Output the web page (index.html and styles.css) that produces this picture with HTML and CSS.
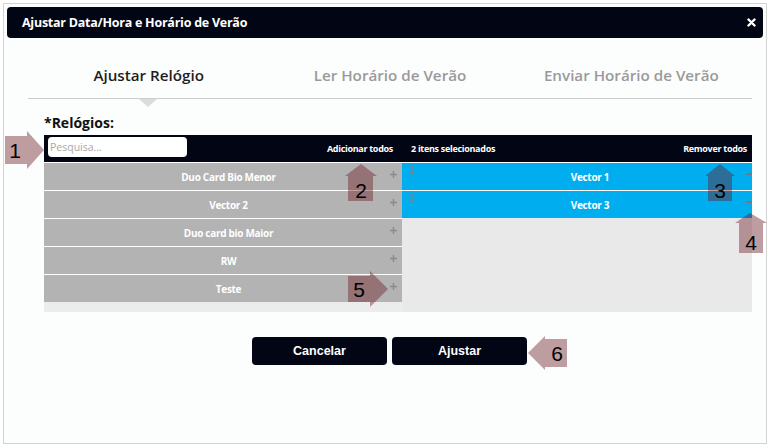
FILE: index.html
```html
<!DOCTYPE html>
<html lang="pt-BR">
<head>
<meta charset="utf-8">
<title>Ajustar Data/Hora e Horário de Verão</title>
<link rel="stylesheet" href="styles.css">
</head>
<body>
<div class="dialog">
  <div class="titlebar">
    <span class="title">Ajustar Data/Hora e Horário de Verão</span>
    <svg class="close" width="9" height="9" viewBox="0 0 9 9"><path d="M1.5 1.5 L7.5 7.5 M7.5 1.5 L1.5 7.5" stroke="#fff" stroke-width="2.4" stroke-linecap="round"/></svg>
  </div>
  <div class="tabs">
    <div class="tab active">Ajustar Relógio</div>
    <div class="tab">Ler Horário de Verão</div>
    <div class="tab">Enviar Horário de Verão</div>
  </div>
  <div class="label">*Relógios:</div>
  <div class="dual">
    <div class="col">
      <div class="dhead dhead-left">
        <input class="search" type="text" placeholder="Pesquisa...">
        <span>Adicionar todos</span>
      </div>
      <div class="list list-left">
        <div class="row"><span class="rtext">Duo Card Bio Menor</span><svg class="plus" width="7" height="7" viewBox="0 0 7 7"><path d="M3.5 0 V7 M0 3.5 H7" stroke="#8a8a8a" stroke-width="1.4"/></svg></div>
        <div class="row"><span class="rtext">Vector 2</span><svg class="plus" width="7" height="7" viewBox="0 0 7 7"><path d="M3.5 0 V7 M0 3.5 H7" stroke="#8a8a8a" stroke-width="1.4"/></svg></div>
        <div class="row"><span class="rtext">Duo card bio Maior</span><svg class="plus" width="7" height="7" viewBox="0 0 7 7"><path d="M3.5 0 V7 M0 3.5 H7" stroke="#8a8a8a" stroke-width="1.4"/></svg></div>
        <div class="row"><span class="rtext">RW</span><svg class="plus" width="7" height="7" viewBox="0 0 7 7"><path d="M3.5 0 V7 M0 3.5 H7" stroke="#8a8a8a" stroke-width="1.4"/></svg></div>
        <div class="row"><span class="rtext">Teste</span><svg class="plus" width="7" height="7" viewBox="0 0 7 7"><path d="M3.5 0 V7 M0 3.5 H7" stroke="#8a8a8a" stroke-width="1.4"/></svg></div>
      </div>
    </div>
    <div class="col">
      <div class="dhead dhead-right">
        <span>2 itens selecionados</span>
        <span>Remover todos</span>
      </div>
      <div class="list list-right">
        <div class="row row-sel"><svg class="handle" width="6" height="10" viewBox="0 0 6 10"><path d="M3 1 V9 M1 3 L3 1 L5 3 M1 7 L3 9 L5 7" stroke="#6f8797" stroke-width="1.3" fill="none"/></svg><span class="rtext rtext-sel">Vector 1</span><span class="minus"></span></div>
        <div class="row row-sel"><svg class="handle" width="6" height="10" viewBox="0 0 6 10"><path d="M3 1 V9 M1 3 L3 1 L5 3 M1 7 L3 9 L5 7" stroke="#6f8797" stroke-width="1.3" fill="none"/></svg><span class="rtext rtext-sel">Vector 3</span><span class="minus"></span></div>
      </div>
    </div>
  </div>
  <div class="actions">
    <button class="btn">Cancelar</button>
    <button class="btn">Ajustar</button>
  </div>
</div>

<svg class="overlay" width="770" height="447" viewBox="0 0 770 447">
  <g class="arrow">
    <polygon points="5,136 27,136 27,131 44,150 27,169 27,164 5,164"/>
    <polygon points="361,164 377,176 373,176 373,201 348,201 348,176 345,176"/>
    <polygon points="720,164 735,176 732,176 732,201 708,201 708,176 705,176"/>
    <polygon points="750,213 767,223 763,223 763,253 739,253 739,223 735,223"/>
    <polygon points="348,276 370,276 370,271 388,289 370,307 370,302 348,302"/>
    <polygon points="528,353 545,336 545,339 567,339 567,367 545,367 545,370"/>
  </g>
  <g class="nums">
    <text x="15" y="158">1</text>
    <text x="361" y="198">2</text>
    <text x="720" y="198">3</text>
    <text x="751" y="250">4</text>
    <text x="359" y="297">5</text>
    <text x="557" y="361">6</text>
  </g>
</svg>
</body>
</html>
```

FILE: styles.css
```css
html, body {
  margin: 0;
  padding: 0;
  background: #ffffff;
}
body {
  position: relative;
  width: 770px;
  height: 447px;
  overflow: hidden;
  font-family: "Open Sans", "Liberation Sans", sans-serif;
}
.dialog {
  box-sizing: border-box;
  margin: 3px 0 0 3px;
  width: 764px;
  height: 441px;
  border: 1px solid #d3d3d3;
  background: #fcfdfd;
  padding: 3px;
}
.titlebar {
  height: 31px;
  background: #020614;
  border-radius: 4px;
  display: flex;
  align-items: center;
  justify-content: space-between;
  padding: 0 7px 0 15px;
  color: #fff;
}
.title {
  font-size: 12.5px;
  font-weight: 700;
  letter-spacing: -0.25px;
}
.close {
  display: block;
}
.tabs {
  display: flex;
  margin: 0 11px 0 21px;
  padding-top: 27px;
  border-bottom: 1px solid #cccccc;
}
.tab {
  flex: 1;
  text-align: center;
  font-size: 15.2px;
  font-weight: 600;
  line-height: 20px;
  color: #9a9a9a;
  padding-bottom: 13px;
  position: relative;
}
.tab.active {
  color: #1e1e1e;
}
.tab.active::after {
  content: "";
  position: absolute;
  left: calc(50% - 10px);
  top: calc(100% + 1px);
  border-left: 9px solid transparent;
  border-right: 9px solid transparent;
  border-top: 8px solid #dcdcdc;
}
.label {
  margin: 14px 0 3px 37px;
  font-size: 14px;
  font-weight: 700;
  line-height: 19px;
  color: #111;
}
.dual {
  display: grid;
  grid-template-columns: 358px 350px;
  margin-left: 37px;
}
.dhead {
  height: 27px;
  background: #020614;
  display: flex;
  align-items: center;
  justify-content: space-between;
  color: #fff;
  font-size: 9px;
  font-weight: 700;
  letter-spacing: -0.3px;
}
.dhead-left {
  padding: 0 9px 0 4px;
}
.dhead-right {
  padding: 0 5px 0 9px;
}
.search {
  box-sizing: border-box;
  width: 139px;
  height: 20px;
  margin: 0 0 3px 0;
  border: 0;
  border-radius: 4px;
  padding: 0 2px;
  font-family: "Open Sans", sans-serif;
  font-size: 10.5px;
  background: #fff;
  outline: none;
}
.search::placeholder {
  color: #a8a8a8;
}
.list {
  height: 150px;
}
.list-left {
  background: #ececec;
}
.list-right {
  background: #e9e9e9;
}
.row {
  height: 27px;
  border-top: 1px solid #ffffff;
  background: #b3b3b3;
  display: flex;
  align-items: center;
  padding-left: 23px;
}
.rtext {
  flex: 1;
  text-align: center;
  color: #fff;
  font-size: 10px;
  font-weight: 700;
  letter-spacing: -0.3px;
}
.plus {
  align-self: flex-start;
  margin: 8px 5px 0 0;
  flex: none;
}
.row-sel {
  background: #00adef;
  padding-left: 7px;
}
.handle {
  align-self: flex-start;
  margin-top: 2px;
  flex: none;
}
.rtext-sel {
  padding-left: 19px;
}
.minus {
  align-self: flex-start;
  margin-top: 10px;
  width: 6px;
  height: 1.5px;
  background: #6d7d87;
  flex: none;
}
.actions {
  display: flex;
  gap: 5px;
  margin: 25px 0 0 245px;
}
.btn {
  width: 135px;
  height: 28px;
  background: #020614;
  color: #fff;
  border: 0;
  border-radius: 4px;
  font-family: "Liberation Sans", Arial, sans-serif;
  font-size: 12.5px;
  font-weight: 700;
  padding: 0;
}
.overlay {
  position: absolute;
  left: 0;
  top: 0;
  pointer-events: none;
}
.arrow polygon {
  fill: rgba(105, 25, 30, 0.42);
}
.nums text {
  font-family: "Liberation Sans", Arial, sans-serif;
  font-size: 21px;
  fill: #000;
  text-anchor: middle;
}
```
